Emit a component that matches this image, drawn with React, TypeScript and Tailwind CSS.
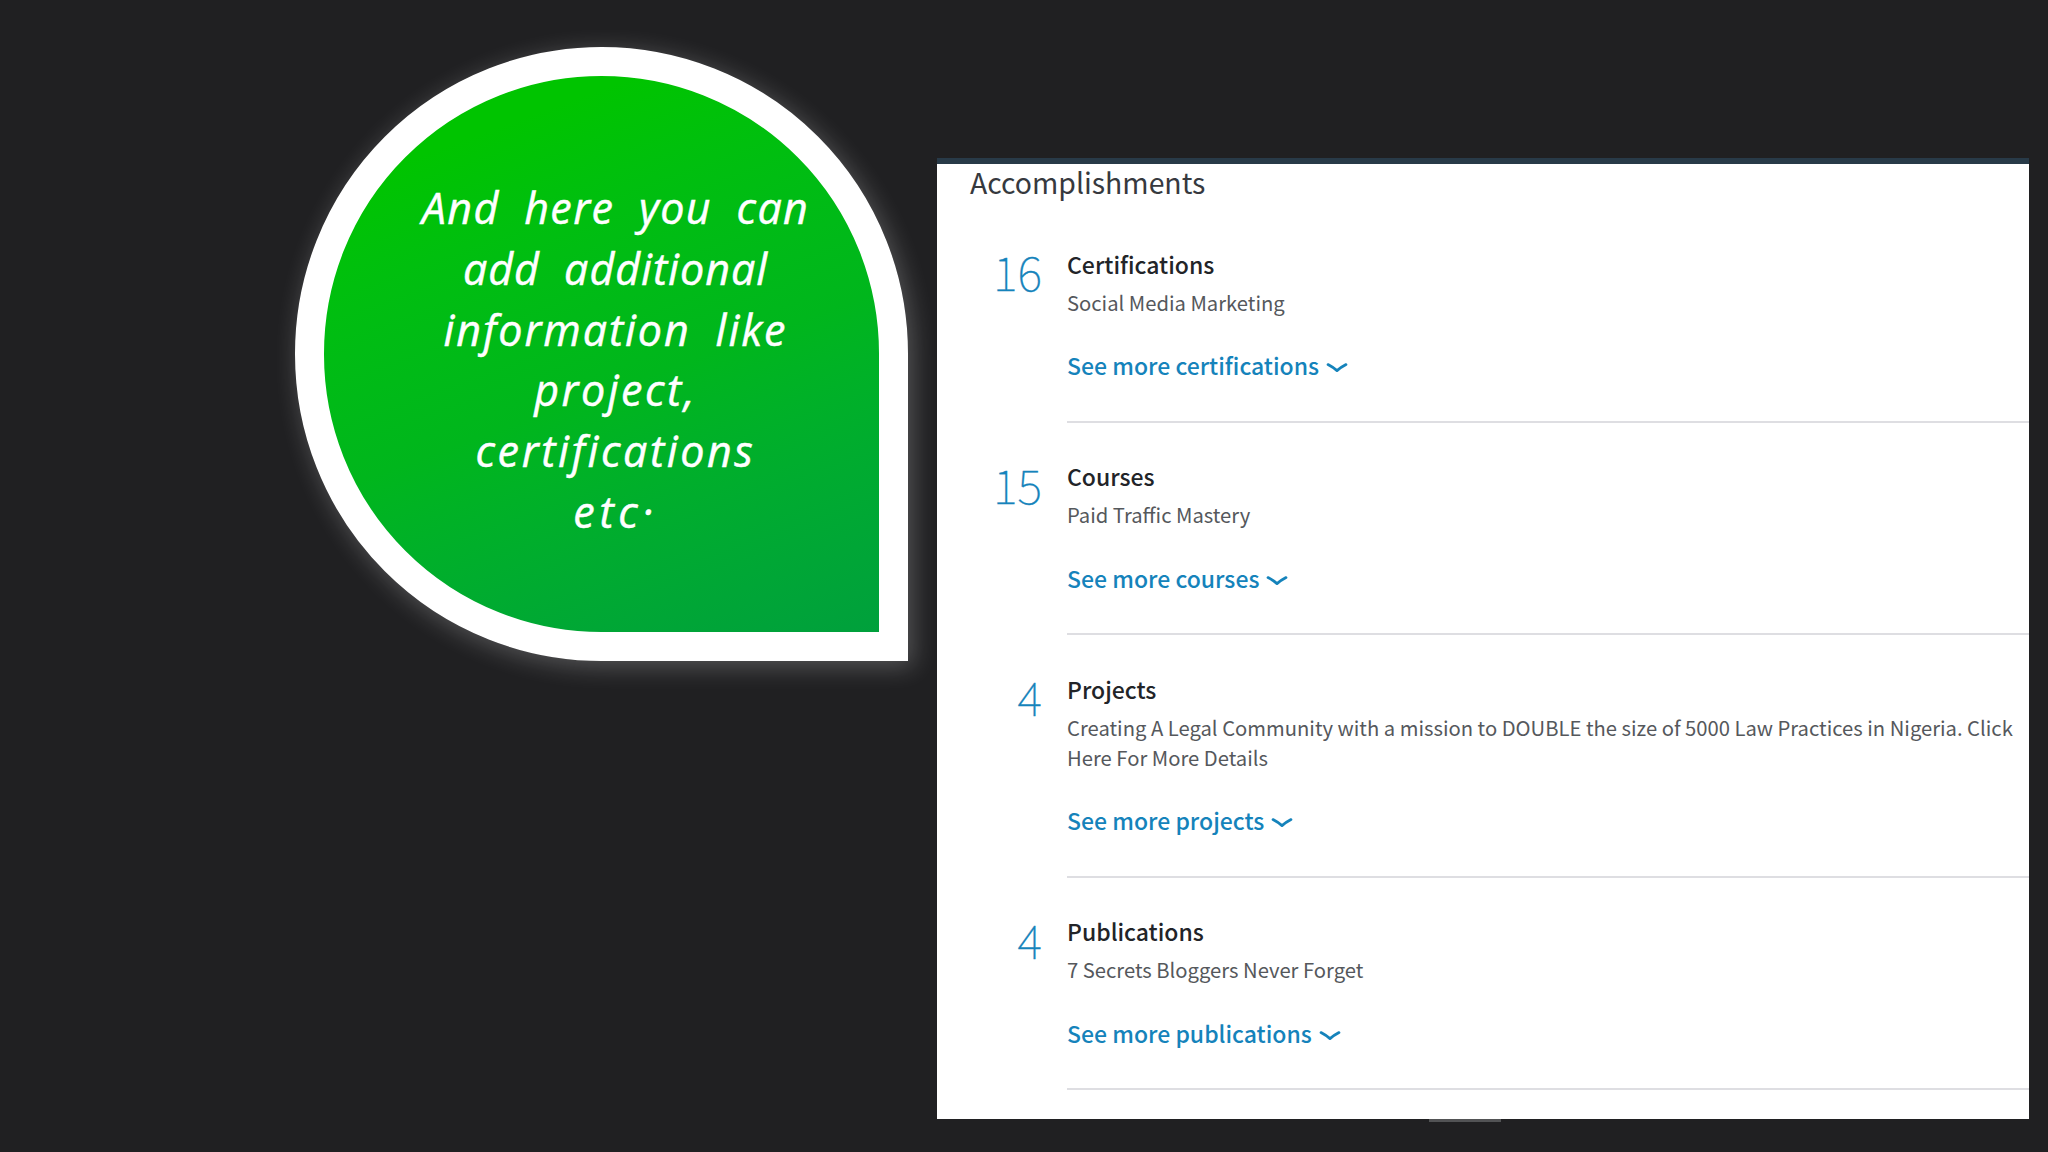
import React from "react";

interface Accomplishment {
  count: number;
  title: string;
  detail: string;
  link: string;
}

const accomplishments: Accomplishment[] = [
  {
    count: 16,
    title: "Certifications",
    detail: "Social Media Marketing",
    link: "See more certifications",
  },
  {
    count: 15,
    title: "Courses",
    detail: "Paid Traffic Mastery",
    link: "See more courses",
  },
  {
    count: 4,
    title: "Projects",
    detail:
      "Creating A Legal Community with a mission to DOUBLE the size of 5000 Law Practices in Nigeria. Click Here For More Details",
    link: "See more projects",
  },
  {
    count: 4,
    title: "Publications",
    detail: "7 Secrets Bloggers Never Forget",
    link: "See more publications",
  },
];

const Chevron = () => (
  <svg width="22" height="12" viewBox="0 0 22 12" fill="none" className="mt-[6px]">
    <path
      d="M2 2.6 C5 4.2 8 6 11 8.6 C14 6 17 4.2 20 2.6"
      stroke="#1583bb"
      strokeWidth="2.8"
      strokeLinecap="round"
      strokeLinejoin="round"
    />
  </svg>
);

const Bubble = () => (
  <div className="mt-[47px] ml-[295px] h-[614px] w-[613px] shrink-0 rounded-full rounded-br-none border-[29px] border-white bg-linear-160 from-[#00c400] from-15% via-[#00b61c] via-55% to-[#00a03c] shadow-[4px_5px_24px_1px_rgba(255,255,255,0.24)]">
    <div className="mt-[102px] ml-[28px] flex flex-col items-center font-['Open_Sans',sans-serif] text-[43px] leading-[60.8px] whitespace-nowrap text-white italic [-webkit-text-stroke:0.5px_white]">
      <span className="tracking-[1.4px] [word-spacing:12px]">And here you can</span>
      <span className="tracking-[1px] [word-spacing:12px]">add additional</span>
      <span className="tracking-[1.9px] [word-spacing:12px]">information like</span>
      <span className="tracking-[2.5px]">project,</span>
      <span className="tracking-[2.6px]">certifications</span>
      <span className="tracking-[4.6px]">etc·</span>
    </div>
  </div>
);

const AccomplishmentRow: React.FC<{ item: Accomplishment }> = ({ item }) => (
  <div className="flex">
    <div className="mt-[38px] w-[105px] text-right text-[47px] leading-[46px] font-thin text-[#1583bb] [-webkit-text-stroke:0.3px_#1583bb]">
      {item.count}
    </div>
    <div className="ml-[25px] flex-1 border-b-2 border-[#dedee2] pt-[38.3px] pb-[40.4px]">
      <h3 className="text-[23px] leading-[30px] font-medium text-[#222428]">
        {item.title}
      </h3>
      <p className="mt-[9px] text-[20.23px] leading-[30px] font-normal text-[#55585c]">
        {item.detail}
      </p>
      <a className="mt-[32.8px] flex items-center gap-[7px] text-[23px] leading-[30px] font-medium text-[#1583bb]">
        {item.link}
        <Chevron />
      </a>
    </div>
  </div>
);

export default function App() {
  return (
    <div className="flex h-[1152px] w-[2048px] overflow-hidden bg-[#202022]">
      <Bubble />
      <div className="relative mt-[158px] ml-[29px] h-[961px] w-[1092px] shrink-0 border-t-6 border-[#283a48] bg-white font-['Noto_Sans_CJK_SC',sans-serif]">
        <h2 className="ml-[33px] h-[46.4px] text-[28.4px] leading-[36px] font-normal text-[#36393e]">
          Accomplishments
        </h2>
        {accomplishments.map((item) => (
          <AccomplishmentRow key={item.title} item={item} />
        ))}
        <div className="absolute top-full left-[492px] h-[3px] w-[72px] bg-[#525355]" />
      </div>
    </div>
  );
}
